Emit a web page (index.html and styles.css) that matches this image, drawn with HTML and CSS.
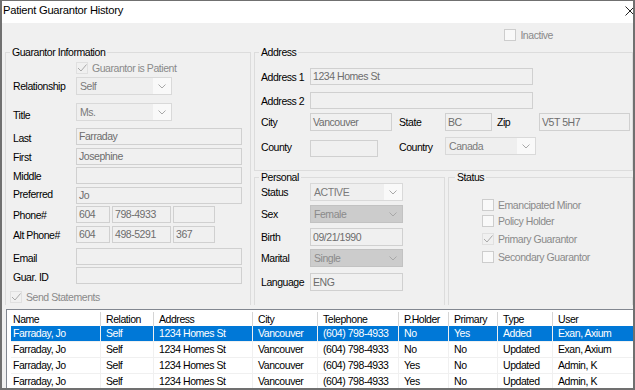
FILE: index.html
```html
<!DOCTYPE html>
<html>
<head>
<meta charset="utf-8">
<link rel="stylesheet" href="styles.css">
</head>
<body>
<div class="window">
  <div class="titlebar">
    <span class="title">Patient Guarantor History</span>
    <svg class="close" width="10" height="10" viewBox="0 0 10 10"><path d="M0.5 0.5 L9.5 9.5 M9.5 0.5 L0.5 9.5" stroke="#222" stroke-width="1" fill="none"/></svg>
  </div>

  <div class="topbar">
    <span class="chk"><span class="box"></span><span class="chk-text">Inactive</span></span>
  </div>

  <div class="groups">
    <fieldset class="grp grp-left">
      <legend>Guarantor Information</legend>
      <div class="row h12 mt4 pad-chk"><span class="chk"><span class="box checked"><svg width="12" height="12" viewBox="0 0 12 12"><path d="M2 6 L5 9 L10.5 2.5" stroke="#a8a8a8" fill="none"/></svg></span><span class="chk-text">Guarantor is Patient</span></span></div>
      <div class="row h18 mt3"><span class="lbl">Relationship</span><span class="cb w96"><span class="cb-text">Self</span><span class="cb-btn"><svg width="8" height="5" viewBox="0 0 8 5"><path d="M0.5 0.5 L4 4 L7.5 0.5" stroke="#a8a8a8" fill="none"/></svg></span></span></div>
      <div class="row h18 mt8"><span class="lbl lo3">Title</span><span class="cb w96"><span class="cb-text">Ms.</span><span class="cb-btn"><svg width="8" height="5" viewBox="0 0 8 5"><path d="M0.5 0.5 L4 4 L7.5 0.5" stroke="#a8a8a8" fill="none"/></svg></span></span></div>
      <div class="row h17 mt7"><span class="lbl lo1">Last</span><span class="tb w166">Farraday</span></div>
      <div class="row h17 mt3"><span class="lbl">First</span><span class="tb w166">Josephine</span></div>
      <div class="row h17 mt2"><span class="lbl">Middle</span><span class="tb w166"></span></div>
      <div class="row h17 mt3"><span class="lbl hi2">Preferred</span><span class="tb w166">Jo</span></div>
      <div class="row h17 mt2"><span class="lbl">Phone#</span><span class="phones"><span class="tb w34">604</span><span class="tb w59">798-4933</span><span class="tb w42"></span></span></div>
      <div class="row h17 mt3"><span class="lbl">Alt Phone#</span><span class="phones"><span class="tb w34">604</span><span class="tb w59">498-5291</span><span class="tb w42">367</span></span></div>
      <div class="row h17 mt5"><span class="lbl lo1">Email</span><span class="tb w166"></span></div>
      <div class="row h17 mt2"><span class="lbl lo1">Guar. ID</span><span class="tb w166"></span></div>
      <div class="row h12 mt7 pad-send"><span class="chk"><span class="box checked"><svg width="12" height="12" viewBox="0 0 12 12"><path d="M2 6 L5 9 L10.5 2.5" stroke="#a8a8a8" fill="none"/></svg></span><span class="chk-text">Send Statements</span></span></div>
    </fieldset>

    <div class="right-col">
      <fieldset class="grp grp-address">
        <legend>Address</legend>
        <div class="row h17 mt10 pad6"><span class="lbl w49">Address 1</span><span class="tb w223">1234 Homes St</span></div>
        <div class="row h17 mt7 pad6"><span class="lbl w49">Address 2</span><span class="tb w223"></span></div>
        <div class="row h18 mt4 pad6"><span class="lbl w49">City</span><span class="tb w82 h18">Vancouver</span><span class="lbl w46 ml7">State</span><span class="tb w47 h18">BC</span><span class="lbl w42 ml5">Zip</span><span class="tb w91 h18">V5T 5H7</span></div>
        <div class="row h20 mt6 pad6"><span class="lbl w49">County</span><span class="tb w68 end"></span><span class="lbl w46 ml21">Country</span><span class="cb w91 start"><span class="cb-text">Canada</span><span class="cb-btn"><svg width="8" height="5" viewBox="0 0 8 5"><path d="M0.5 0.5 L4 4 L7.5 0.5" stroke="#a8a8a8" fill="none"/></svg></span></span></div>
      </fieldset>

      <div class="sub-groups">
        <fieldset class="grp grp-personal">
          <legend>Personal</legend>
          <div class="row h18 pad6"><span class="lbl w49">Status</span><span class="cb w93"><span class="cb-text">ACTIVE</span><span class="cb-btn"><svg width="8" height="5" viewBox="0 0 8 5"><path d="M0.5 0.5 L4 4 L7.5 0.5" stroke="#a8a8a8" fill="none"/></svg></span></span></div>
          <div class="row h18 mt4 pad6"><span class="lbl w49">Sex</span><span class="cb dis w93"><span class="cb-text">Female</span><span class="cb-btn"><svg width="8" height="5" viewBox="0 0 8 5"><path d="M0.5 0.5 L4 4 L7.5 0.5" stroke="#a8a8a8" fill="none"/></svg></span></span></div>
          <div class="row h18 mt5 pad6"><span class="lbl w49">Birth</span><span class="tb w93 h18">09/21/1990</span></div>
          <div class="row h18 mt3 pad6"><span class="lbl w49">Marital</span><span class="cb dis w93"><span class="cb-text">Single</span><span class="cb-btn"><svg width="8" height="5" viewBox="0 0 8 5"><path d="M0.5 0.5 L4 4 L7.5 0.5" stroke="#a8a8a8" fill="none"/></svg></span></span></div>
          <div class="row h18 mt6 pad6"><span class="lbl w49">Language</span><span class="tb w93 h18">ENG</span></div>
        </fieldset>
        <fieldset class="grp grp-status">
          <legend>Status</legend>
          <div class="row h12 mt16 pad33"><span class="chk"><span class="box"></span><span class="chk-text">Emancipated Minor</span></span></div>
          <div class="row h12 mt4 pad33"><span class="chk"><span class="box"></span><span class="chk-text">Policy Holder</span></span></div>
          <div class="row h12 mt6 pad33"><span class="chk"><span class="box checked"><svg width="12" height="12" viewBox="0 0 12 12"><path d="M2 6 L5 9 L10.5 2.5" stroke="#a8a8a8" fill="none"/></svg></span><span class="chk-text">Primary Guarantor</span></span></div>
          <div class="row h12 mt6 pad33"><span class="chk"><span class="box"></span><span class="chk-text">Secondary Guarantor</span></span></div>
        </fieldset>
      </div>
    </div>
  </div>

  <div class="list">
    <div class="lhead">
      <span>Name</span><span>Relation</span><span>Address</span><span>City</span><span>Telephone</span><span>P.Holder</span><span>Primary</span><span>Type</span><span>User</span>
    </div>
    <div class="lrow selected">
      <span>Farraday, Jo</span><span>Self</span><span>1234 Homes St</span><span>Vancouver</span><span>(604) 798-4933</span><span>No</span><span>Yes</span><span>Added</span><span>Exan, Axium</span>
    </div>
    <div class="lrow">
      <span>Farraday, Jo</span><span>Self</span><span>1234 Homes St</span><span>Vancouver</span><span>(604) 798-4933</span><span>No</span><span>No</span><span>Updated</span><span>Exan, Axium</span>
    </div>
    <div class="lrow">
      <span>Farraday, Jo</span><span>Self</span><span>1234 Homes St</span><span>Vancouver</span><span>(604) 798-4933</span><span>Yes</span><span>No</span><span>Updated</span><span>Admin, K</span>
    </div>
    <div class="lrow">
      <span>Farraday, Jo</span><span>Self</span><span>1234 Homes St</span><span>Vancouver</span><span>(604) 798-4933</span><span>Yes</span><span>No</span><span>Updated</span><span>Admin, K</span>
    </div>
  </div>
</div>
</body>
</html>
```

FILE: styles.css
```css
html, body {
  margin: 0;
  padding: 0;
  background: #fff;
}

.window {
  width: 635px;
  height: 390px;
  box-sizing: border-box;
  border: 2px solid #707070;
  border-top-width: 1px;
  background: #f0f0f0;
  overflow: hidden;
  font-family: "Liberation Sans", Arial, sans-serif;
  font-size: 10.5px;
  letter-spacing: -0.45px;
  color: #000;
}

.titlebar {
  height: 22px;
  background: #fff;
  display: flex;
  align-items: flex-start;
  justify-content: space-between;
}

.title {
  font-size: 11.2px;
  letter-spacing: -0.25px;
  line-height: 19px;
  padding-left: 1px;
}

.close {
  margin-top: 5px;
  margin-right: -2px;
}

.topbar {
  height: 12px;
  margin-top: 6px;
  display: flex;
  justify-content: flex-end;
  padding-right: 80px;
}

.chk {
  display: flex;
  align-items: center;
  height: 12px;
}

.box {
  width: 12px;
  height: 12px;
  box-sizing: border-box;
  border: 1px solid #cdcdcd;
  background: #f9f9f9;
  flex: none;
  position: relative;
}

.box svg {
  position: absolute;
  left: -1px;
  top: -1px;
}

.box.checked {
  border-color: #e0e0e0;
  background: #f0f0f0;
}

.chk-text {
  color: #8a8a8a;
  margin-left: 4px;
  line-height: 12px;
}

.groups {
  display: flex;
  gap: 3px;
  margin: 5px 0 0 3px;
  height: 259px;
}

.grp {
  margin: 0;
  padding: 0;
  border: 1px solid #dcdcdc;
  min-width: 0;
  box-sizing: border-box;
}

.grp legend {
  padding: 0 2px;
  margin-left: 4px;
  line-height: 12px;
  font-size: 10.5px;
}

.grp-left {
  width: 246px;
  height: 259px;
  border-bottom: none;
}

.right-col {
  flex: 1;
  display: flex;
  flex-direction: column;
}

.grp-address {
  height: 125px;
}

.sub-groups {
  display: flex;
  gap: 3px;
  height: 134px;
}

.grp-personal {
  width: 191px;
  height: 134px;
  border-bottom: none;
}

.grp-status {
  flex: 1;
  height: 134px;
  border-bottom: none;
}

.grp-status legend {
  margin-left: 6px;
}

.row {
  display: flex;
  align-items: center;
  padding-left: 7px;
}

.pad6 { padding-left: 6px; }
.pad33 { padding-left: 33px; }
.pad-chk { padding-left: 70px; }
.pad-send { padding-left: 4px; }

.h12 { height: 12px; }
.h17 { height: 17px; }
.h18 { height: 18px; }
.h20 { height: 20px; }

.mt2 { margin-top: 2px; }
.mt3 { margin-top: 3px; }
.mt4 { margin-top: 4px; }
.mt5 { margin-top: 5px; }
.mt6 { margin-top: 6px; }
.mt7 { margin-top: 7px; }
.mt8 { margin-top: 8px; }
.mt10 { margin-top: 10px; }
.mt16 { margin-top: 16px; }

.lbl {
  width: 63px;
  flex: none;
  line-height: 12px;
  white-space: nowrap;
}

.lo1 { padding-top: 3px; }
.lo3 { padding-top: 6px; }
.hi2 { padding-bottom: 4px; }

.lbl.w46 { width: 46px; }
.lbl.w49 { width: 49px; }
.lbl.w42 { width: 42px; }
.ml5 { margin-left: 5px; }
.ml7 { margin-left: 7px; }
.ml21 { margin-left: 21px; }

.tb {
  display: block;
  height: 17px;
  box-sizing: border-box;
  border: 1px solid #d0d0d0;
  background: #f0f0f0;
  color: #6d6d6d;
  padding-left: 2px;
  line-height: 15px;
  white-space: nowrap;
  overflow: hidden;
  flex: none;
}

.tb.h18 {
  height: 18px;
  line-height: 16px;
}

.w34 { width: 34px; }
.w42 { width: 42px; }
.w47 { width: 47px; }
.w59 { width: 59px; }
.w68 { width: 68px; }
.w82 { width: 82px; }
.w91 { width: 91px; }
.w93 { width: 93px; }
.w96 { width: 96px; }
.w166 { width: 166px; }
.w223 { width: 223px; }

.end { align-self: flex-end; }
.start { align-self: flex-start; }

.phones {
  display: flex;
  gap: 2px;
}

.cb {
  display: flex;
  height: 18px;
  box-sizing: border-box;
  border: 1px solid #d9d9d9;
  background: #f9f9f9;
  flex: none;
}

.cb-text {
  flex: 1;
  background: #efefef;
  color: #7a7a7a;
  padding-left: 3px;
  line-height: 16px;
}

.cb-btn {
  width: 18px;
  display: flex;
  align-items: center;
  justify-content: center;
}

.cb.dis {
  background: #cccccc;
  border-color: #c2c2c2;
}

.cb.dis .cb-text {
  background: #cccccc;
  color: #8a8a8a;
}

.list {
  margin: 4px 0 0 4px;
  height: 79px;
  box-sizing: border-box;
  border-top: 1px solid #828790;
  border-left: 1px solid #828790;
  background: #fff;
  padding-top: 2px;
  overflow: hidden;
}

.lhead, .lrow {
  display: grid;
  grid-template-columns: 94px 53px 99px 65px 81px 50px 49px 55px 1fr;
  white-space: nowrap;
}

.lhead {
  height: 14px;
  line-height: 14px;
}

.lhead span {
  padding-left: 5px;
  border-right: 1px solid #d5d5d5;
  overflow: hidden;
}

.lhead span:first-child {
  padding-left: 6px;
}

.lhead span:last-child {
  border-right: none;
}

.lrow {
  grid-template-columns: 90px 53px 99px 65px 81px 50px 49px 55px 1fr;
  margin-left: 4px;
  height: 16px;
  box-sizing: border-box;
  border-bottom: 1px solid #f0f0f0;
  line-height: 15px;
}

.lrow span {
  padding-left: 5px;
  border-right: 1px solid #f0f0f0;
  overflow: hidden;
}

.lrow span:first-child {
  padding-left: 2px;
}

.lrow span:last-child {
  border-right: none;
}

.lrow.selected {
  background: #0078d7;
  color: #fff;
}
```
